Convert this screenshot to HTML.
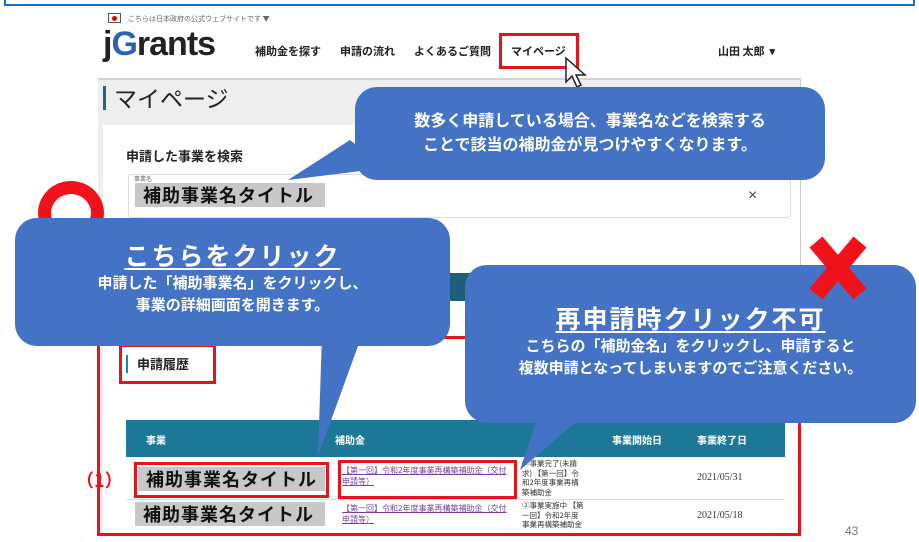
<!DOCTYPE html><html><head><meta charset="utf-8"><style>
*{margin:0;padding:0;box-sizing:border-box}
body{width:919px;height:542px;position:relative;overflow:hidden;background:#fff;font-family:"Liberation Sans","Noto Sans CJK JP",sans-serif}
.a{position:absolute}
.cj{font-family:"Noto Sans CJK JP",sans-serif}
.hl{background:#c8c8c8;font-weight:bold;font-size:18px;color:#111;padding-left:8px;line-height:24px;letter-spacing:1px}
.bub{background:#4472c4;border-radius:22px;color:#fff;text-align:center;font-weight:bold}
.rb{border:3px solid #e8141b}
.sm{font-size:10px;color:#333}
</style></head><body>
<div class="a" style="left:4px;top:0;width:911px;height:6px;border:2px solid #1a6fc8;border-top:none"></div>
<div class="a" style="left:98px;top:12px;width:703px;height:524px;background:#eeeeee;border-right:1px solid #ccc"></div>
<div class="a" style="left:98px;top:12px;width:703px;height:68px;background:#fff;border-bottom:2px solid #d4d4d4"></div>
<div class="a" style="left:108px;top:13px;width:13px;height:10px;border:1px solid #555;background:#fff"><div style="width:5px;height:5px;border-radius:50%;background:#e00;margin:1.5px auto"></div></div>
<div class="a cj" style="left:128px;top:14px;font-size:7px;color:#666">こちらは日本政府の公式ウェブサイトです ▼</div>
<div class="a" style="left:103px;top:25px;font-size:34px;color:#222;letter-spacing:-1px;font-weight:bold">j<span style="color:#2b62b5">G</span>rants</div>
<div class="a cj" style="left:255px;top:43px;font-size:11px;color:#222;font-weight:bold">補助金を探す</div>
<div class="a cj" style="left:340px;top:43px;font-size:11px;color:#222;font-weight:bold">申請の流れ</div>
<div class="a cj" style="left:414px;top:43px;font-size:11px;color:#222;font-weight:bold">よくあるご質問</div>
<div class="a cj" style="left:511px;top:43px;font-size:11px;color:#222;font-weight:bold">マイページ</div>
<div class="a rb" style="left:499px;top:33px;width:80px;height:36px"></div>
<div class="a cj" style="left:718px;top:43px;font-size:11px;color:#222;font-weight:bold">山田 太郎 &nbsp;▾</div>
<svg class="a" style="left:564px;top:56px" width="28" height="34"><path d="M2 2 L2 26 L8 20 L13 31 L17 29 L12 19 L21 19 Z" fill="#fff" stroke="#222" stroke-width="1.5"/></svg>
<div class="a" style="left:103px;top:86px;width:3px;height:24px;background:#1a6a80"></div>
<div class="a cj" style="left:114px;top:80px;font-size:23px;color:#222">マイページ</div>
<div class="a" style="left:103px;top:125px;width:697px;height:411px;background:#fff"></div>
<div class="a cj" style="left:126px;top:146px;font-size:13px;color:#222;font-weight:bold">申請した事業を検索</div>
<div class="a" style="left:128px;top:174px;width:663px;height:44px;border:1px solid #ddd;border-radius:3px"></div>
<div class="a cj" style="left:134px;top:174px;font-size:6px;color:#666">事業名</div>
<div class="a cj hl" style="left:135px;top:183px;width:190px">補助事業名タイトル</div>
<div class="a" style="left:748px;top:187px;font-size:16px;color:#444">×</div>
<div class="a" style="left:440px;top:273px;width:30px;height:28px;background:#1d5f78"></div>
<div class="a" style="left:470px;top:301px;width:330px;height:36px;background:#eee"></div>
<div class="a" style="left:126px;top:355px;width:2px;height:18px;background:#1a8a9a"></div>
<div class="a cj" style="left:137px;top:354px;font-size:13px;color:#222;font-weight:bold">申請履歴</div>
<div class="a rb" style="left:119px;top:344px;width:97px;height:40px"></div>
<div class="a" style="left:126px;top:420px;width:659px;height:37px;background:#1c7896"></div>
<div class="a cj" style="left:146px;top:432px;font-size:10px;color:#fff;font-weight:bold">事業</div>
<div class="a cj" style="left:335px;top:432px;font-size:10px;color:#fff;font-weight:bold">補助金</div>
<div class="a cj" style="left:612px;top:432px;font-size:10px;color:#fff;font-weight:bold">事業開始日</div>
<div class="a cj" style="left:697px;top:432px;font-size:10px;color:#fff;font-weight:bold">事業終了日</div>
<div class="a" style="left:126px;top:499px;width:659px;height:1px;background:#ddd"></div>
<div class="a cj" style="left:76px;top:467px;font-size:18px;color:#e8141b;font-weight:bold">（1）</div>
<div class="a cj hl" style="left:138px;top:467px;width:187px">補助事業名タイトル</div>
<div class="a rb" style="left:134px;top:462px;width:195px;height:36px"></div>
<div class="a cj" style="left:342px;top:465px;width:170px;font-size:8px;color:#7b3fa0;text-decoration:underline;line-height:11px">【第一回】令和2年度事業再構築補助金（交付申請等）</div>
<div class="a rb" style="left:338px;top:460px;width:179px;height:39px"></div>
<div class="a cj" style="left:522px;top:459px;width:62px;font-size:7.5px;color:#333;line-height:9.5px">②事業完了(未請求) 【第一回】令和2年度事業再構築補助金</div>
<div class="a" style="left:697px;top:472px;font-size:10px;color:#333;font-family:'Liberation Serif',serif">2021/05/31</div>
<div class="a cj hl" style="left:135px;top:502px;width:190px">補助事業名タイトル</div>
<div class="a cj" style="left:342px;top:503px;width:170px;font-size:8px;color:#7b3fa0;text-decoration:underline;line-height:11px">【第一回】令和2年度事業再構築補助金（交付申請等）</div>
<div class="a cj" style="left:522px;top:501px;width:62px;font-size:7.5px;color:#333;line-height:9.5px">②事業実施中 【第一回】令和2年度事業再構築補助金</div>
<div class="a" style="left:697px;top:510px;font-size:10px;color:#333;font-family:'Liberation Serif',serif">2021/05/18</div>
<div class="a rb" style="left:97px;top:336px;width:704px;height:200px"></div>
<div class="a" style="left:845px;top:524px;font-size:12px;color:#777">43</div>
<div class="a" style="left:38px;top:181px;width:66px;height:64px;border-radius:50%;border:13px solid #f0121a"></div>
<svg class="a" style="left:0;top:0" width="919" height="542">
<polygon points="350,140 385,168 288,180" fill="#4472c4"/>
<polygon points="322,335 362,335 318,456" fill="#4472c4"/>
<polygon points="540,410 590,410 520,470" fill="#4472c4"/>
</svg>
<div class="a bub cj" style="left:355px;top:87px;width:470px;height:93px;padding-top:20px;font-size:16px;line-height:24px">数多く申請している場合、事業名などを検索する<br>ことで該当の補助金が見つけやすくなります。</div>
<div class="a bub cj" style="left:15px;top:218px;width:435px;height:128px;padding-top:22px">
<div style="font-size:25px;line-height:30px;text-decoration:underline;text-underline-offset:3px;letter-spacing:2px">こちらをクリック</div>
<div style="font-size:15px;line-height:22px;margin-top:2px">申請した「補助事業名」をクリックし、<br>事業の詳細画面を開きます。</div></div>
<div class="a bub cj" style="left:465px;top:265px;width:451px;height:158px;padding-top:38px">
<div style="font-size:25px;line-height:30px;text-decoration:underline;text-underline-offset:3px;letter-spacing:2px">再申請時クリック不可</div>
<div style="font-size:15px;line-height:22px;margin-top:2px">こちらの「補助金名」をクリックし、申請すると<br>複数申請となってしまいますのでご注意ください。</div></div>
<svg class="a" style="left:806px;top:236px" width="64" height="64"><path d="M10 6 L54 58 M54 6 L10 58" stroke="#f0121a" stroke-width="17"/></svg>
</body></html>
